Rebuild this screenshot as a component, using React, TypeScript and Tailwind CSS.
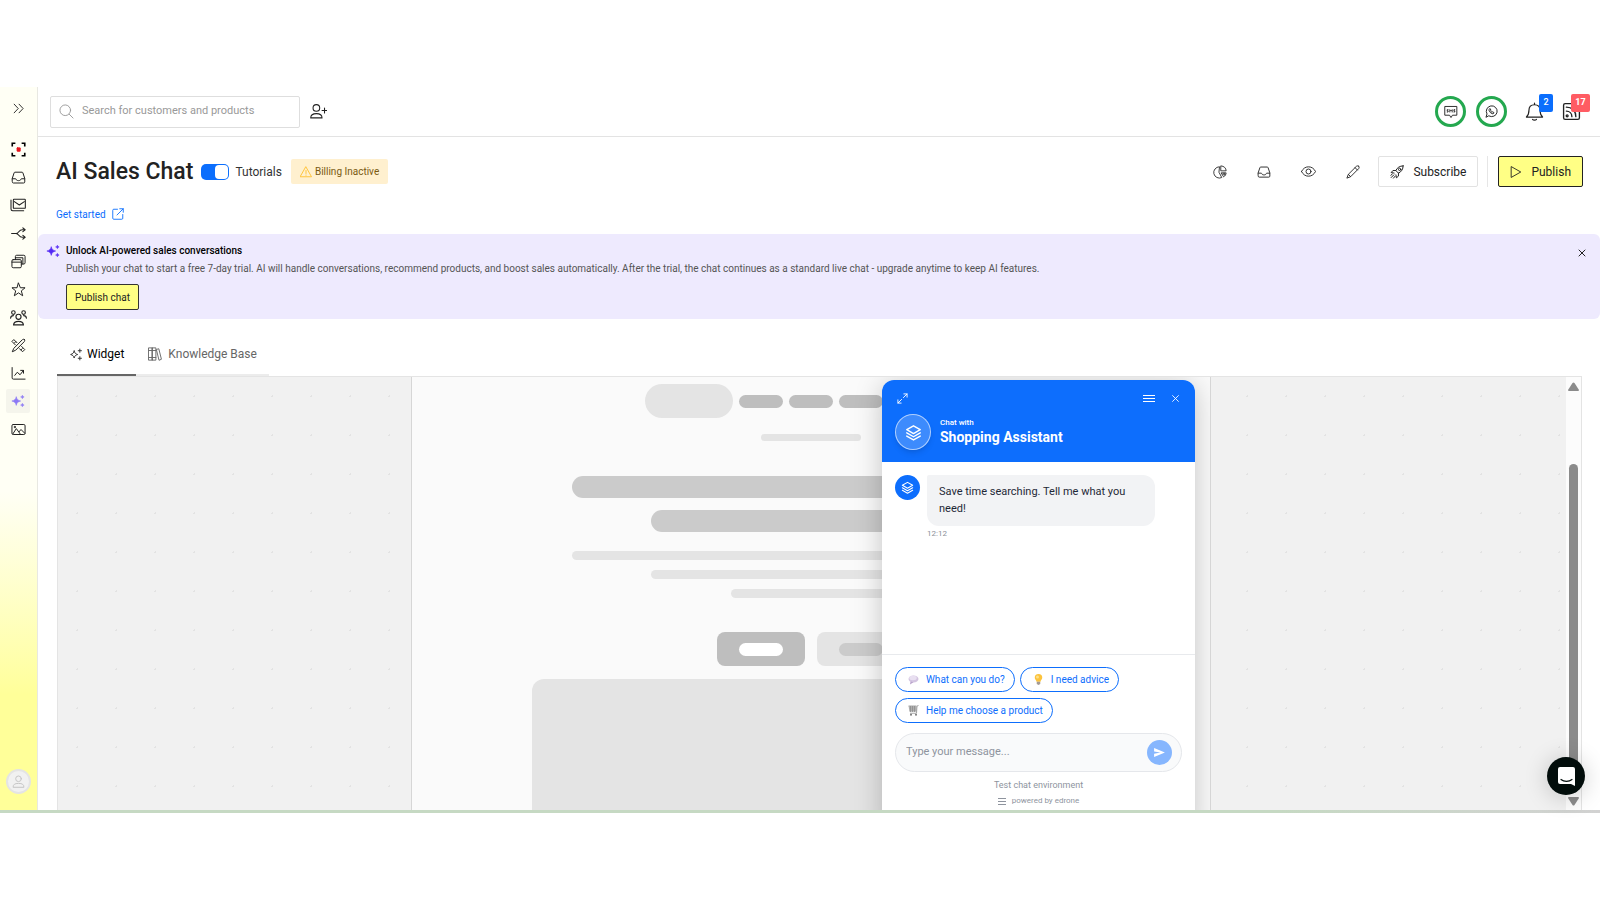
import React from 'react';

interface IconProps {
  size?: number;
  stroke?: number;
  className?: string;
  children?: React.ReactNode;
}

const Icon: React.FC<IconProps> = ({ size = 16, stroke = 1.6, className = '', children }) => (
  <svg
    width={size}
    height={size}
    viewBox="0 0 24 24"
    fill="none"
    stroke="currentColor"
    strokeWidth={stroke}
    strokeLinecap="round"
    strokeLinejoin="round"
    aria-hidden="true"
    className={`shrink-0 ${className}`}
  >
    {children}
  </svg>
);

const inboxPaths = (
  <>
    <path d="M2 13.5 5 4.5a1.5 1.5 0 0 1 1.4-1h11.2a1.5 1.5 0 0 1 1.4 1l3 9V19a1.8 1.8 0 0 1-1.8 1.8H3.8A1.8 1.8 0 0 1 2 19z" />
    <path d="M2.2 14h5c.5 0 .8.3.9.8.4 1.5 2 2.2 3.9 2.2s3.5-.7 3.9-2.2c.1-.5.4-.8.9-.8h5" />
  </>
);

const SparkleSolid: React.FC<{ size?: number; className?: string }> = ({ size = 16, className = '' }) => (
  <svg width={size} height={size} viewBox="0 0 24 24" fill="currentColor" stroke="currentColor" strokeLinejoin="round" aria-hidden="true" className={`shrink-0 ${className}`}>
    <path d="M9 4.500c1 4.500 2.500 6 7.500 7.500-5 1.500-6.500 3-7.500 7.500-1-4.500-2.500-6-7.500-7.500 5-1.500 6.500-3 7.500-7.500z" />
    <path d="M19.500 2c.4 2 1 2.600 3 3-2 .4-2.600 1-3 3-.4-2-1-2.600-3-3 2-.4 2.600-1 3-3z" />
    <path d="M19.500 16c.4 2 1 2.600 3 3-2 .4-2.600 1-3 3-.4-2-1-2.600-3-3 2-.4 2.600-1 3-3z" />
  </svg>
);

const LayersIcon: React.FC<{ size: number }> = ({ size }) => (
  <Icon size={size} stroke={2}>
    <path d="M12 2.500 21.500 8 12 13.500 2.500 8z" />
    <path d="M2.500 12.500 12 18l9.500-5.500" />
    <path d="M2.500 17 12 22.500 21.500 17" />
  </Icon>
);

const UserIcon: React.FC<{ size: number }> = ({ size }) => (
  <Icon size={size} stroke={1.8}>
    <circle cx="12" cy="7" r="5.200" />
    <path d="M2 22c0-4.500 3-6.500 10-6.500S22 17.500 22 22z" />
  </Icon>
);

const navItems = [
  {
    label: 'Live view',
    icon: (
      <Icon size={15} stroke={2.6} className="text-black">
        <path d="M2 7V2h5M17 2h5v5M22 17v5h-5M7 22H2v-5" strokeLinecap="butt" strokeLinejoin="miter" />
        <rect x="9.500" y="9" width="5.500" height="6" rx="1" fill="#e8141c" stroke="#e8141c" strokeWidth="1" />
      </Icon>
    ),
  },
  { label: 'Inbox', icon: <Icon size={15}>{inboxPaths}</Icon> },
  {
    label: 'Newsletters',
    icon: (
      <Icon>
        <rect x="5" y="3.500" width="18" height="13.500" rx="1" />
        <path d="m6.500 7 7.500 5 7.500-5" />
        <path d="M1.500 4.500v13.500a2.500 2.500 0 0 0 2.500 2.500h16.500" />
      </Icon>
    ),
  },
  {
    label: 'Automation',
    icon: (
      <Icon size={15} stroke={1.8}>
        <path d="M1 12h7c5-.2 4-6 10-6h4M8 12c5 .2 4 6 10 6h4" />
        <path d="m19 3 3.500 3-3.500 3M19 15l3.500 3-3.500 3" />
      </Icon>
    ),
  },
  {
    label: 'Pop-ups',
    icon: (
      <Icon size={15}>
        <rect x="1.500" y="9" width="15" height="13" rx="2" />
        <path d="M1.500 13h15" />
        <path d="M7 9V4a2 2 0 0 1 2-2h11.500a2 2 0 0 1 2 2v10a2 2 0 0 1-2 2h-4M7 6h12v10" />
      </Icon>
    ),
  },
  {
    label: 'Reviews',
    icon: (
      <Icon size={15}>
        <path d="m12 1.800 3 7.400h7.500l-6 5 2.200 7.800-6.700-4.600L5.300 22l2.200-7.800-6-5H9z" />
      </Icon>
    ),
  },
  {
    label: 'Customers',
    icon: (
      <Icon size={17}>
        <circle cx="12" cy="11" r="3.600" />
        <path d="M5 22.500c.3-3.500 3-5 7-5s6.700 1.500 7 5z" />
        <circle cx="4.800" cy="5" r="2.500" />
        <circle cx="19.200" cy="5" r="2.500" />
        <path d="M.8 13c.2-2.500 1.700-3.700 4-3.700M23.200 13c-.2-2.500-1.700-3.700-4-3.700" />
      </Icon>
    ),
  },
  {
    label: 'Design tools',
    icon: (
      <Icon size={15}>
        <path d="M21.500 2.500c-1.200-1-2.500-.6-3.500.4L4.500 16.500 2 22l5.500-2.500L21 6c1-1 1.500-2.500.5-3.500z" />
        <path d="m9.500 7.500-5-5-3 3 5.500 5.500M13.500 17l5 5 3.500-3.500-5-5" />
        <path d="m5.500 8 2-2M16 19l2-2" />
      </Icon>
    ),
  },
  {
    label: 'Analytics',
    icon: (
      <Icon size={15}>
        <path d="M1.800 2.500V19a2 2 0 0 0 2 2H22.500" />
        <path d="m6 15 4-5 4.500 4 5.500-7" />
        <path d="M15.500 7H20v4.500" />
      </Icon>
    ),
  },
  { label: 'AI tools', active: true, icon: <SparkleSolid size={14} className="text-[#8b78f5]" /> },
  {
    label: 'Gallery',
    icon: (
      <Icon size={15}>
        <rect x="1.500" y="4" width="21" height="16" rx="2" />
        <path d="m3 19 5.500-8.500 6.500 9M13 15.500l3-3.500 6 6" />
        <circle cx="6" cy="8" r="1" />
      </Icon>
    ),
  },
];

const Sidebar: React.FC = () => (
  <aside className="flex w-[38px] shrink-0 flex-col items-center border-r border-[#e8e8e2] bg-linear-to-b from-[#fffff5] from-56% to-[#ffff99] to-84% pt-[9px] pr-px pb-4 text-[#222]">
    <button aria-label="Expand menu" className="flex size-6 items-center justify-center">
      <Icon size={13} stroke={1.7}>
        <path d="m4 4 7.500 8L4 20M13 4l7.500 8-7.500 8" />
      </Icon>
    </button>
    <nav className="mt-[17px] flex flex-1 flex-col gap-1">
      {navItems.map((item) => (
        <a
          key={item.label}
          href="#"
          aria-label={item.label}
          className={`flex size-6 items-center justify-center rounded-xs ${item.active ? 'bg-[#f5f5ec]' : ''}`}
        >
          {item.icon}
        </a>
      ))}
    </nav>
    <button aria-label="Account" className="flex size-[25px] items-center justify-center rounded-full border-2 border-[#e4e4e4] bg-[#f1f1f1] text-[#c4c4c4]">
      <UserIcon size={13} />
    </button>
  </aside>
);

const TopBar: React.FC = () => (
  <header className="flex h-[50px] shrink-0 items-center border-b border-[#e3e3e3] pr-[19px] pl-3">
    <label className="flex h-8 w-[250px] items-center gap-2 rounded-xs border border-[#dedede] px-2 text-[#9a9a9a]">
      <Icon size={15} stroke={1.5}>
        <circle cx="10" cy="10" r="8.500" />
        <path d="m16.500 16.500 6 6" />
      </Icon>
      <input
        type="text"
        aria-label="Search"
        placeholder="Search for customers and products"
        className="w-full text-[11px] outline-none placeholder:text-[#999]"
      />
    </label>
    <button aria-label="Add customer" className="ml-[10px] text-[#222]">
      <Icon size={17} stroke={1.5}>
        <circle cx="9" cy="7" r="4.700" />
        <path d="M1 21c0-4 2-6 8-6s8 2 8 6zM20.500 7v7M17 10.500h7" />
      </Icon>
    </button>
    <div className="ml-auto flex items-center text-[#222]">
      <button aria-label="SMS" className="flex size-[31px] items-center justify-center rounded-full border-[3px] border-[#24a84f]">
        <Icon size={14} stroke={1.6}>
          <path d="M2 2.500h20v15h-7.500L12 21.500l-2.500-4H2z" />
          <path d="M7 8H5.500v2H7v2H5.500M10 12V8l2 2 2-2v4M18.500 8H17v2h1.500v2H17" />
        </Icon>
      </button>
      <button aria-label="WhatsApp" className="ml-[10px] flex size-[31px] items-center justify-center rounded-full border-[3px] border-[#24a84f]">
        <Icon size={13} stroke={1.8}>
          <path d="M2 22l1.700-5.500A10 10 0 1 1 7.500 20.300z" />
          <path d="M8 7.500c-1.500 1.500-.5 4 1.800 6.300 2.200 2.200 4.800 3.200 6.200 1.700l.5-1.500-2.500-1.500-1.200 1c-1-.4-2.400-1.700-2.700-2.700l1-1.300L9.500 7z" />
        </Icon>
      </button>
      <button aria-label="Notifications, 2 new" className="relative ml-[18px]">
        <Icon size={19} stroke={1.5}>
          <path d="M12 3.500c-4.500 0-7 3-7 7C5 15 4 17 1.800 19h20.400C20 17 19 15 19 10.500c0-4-2.500-7-7-7zM12 3.500V1.500M9.500 22c1 1.300 4 1.300 5 0" />
        </Icon>
        <span className="absolute -top-2 left-[14px] flex h-[18px] w-[14px] items-center justify-center rounded-xs bg-[#0b6efd] text-[9px] font-medium text-white">2</span>
      </button>
      <button aria-label="News, 17 new" className="relative ml-[18px]">
        <Icon size={19} stroke={1.7}>
          <rect x="2" y="2" width="20" height="20" rx="2" />
          <path d="M5.500 6.500c7 0 12 5 12 12M5.500 11.500c4 0 7 3 7 7" />
          <circle cx="6.500" cy="17.500" r="1.200" />
        </Icon>
        <span className="absolute -top-2 left-[9px] flex h-[18px] w-[19px] items-center justify-center rounded-xs bg-[#ff5c63] text-[9px] font-bold text-white">17</span>
      </button>
    </div>
  </header>
);

const PageHeader: React.FC = () => (
  <section className="shrink-0 pt-[19px] pr-[17px] pb-[11px] pl-[18px]">
    <div className="flex h-[31px] items-center">
      <h1 className="text-[23px] leading-none font-medium text-[#222]">AI Sales Chat</h1>
      <label className="ml-2 flex cursor-pointer items-center gap-[6px] text-xs text-[#333]">
        <input type="checkbox" defaultChecked className="peer sr-only" />
        <span className="flex h-4 w-7 justify-end rounded-[5px] bg-[#0b6efd] p-px">
          <span className="h-full w-[13px] rounded-sm bg-white" />
        </span>
        Tutorials
      </label>
      <span className="ml-[9px] flex h-[25px] items-center gap-[3px] rounded-xs bg-[#fff0cf] px-[9px] text-[10px] text-[#7a5a12]">
        <Icon size={12} stroke={1.8} className="text-[#ffc02e]">
          <path d="M12 2 23 21.500H1zM12 9v6M12 18v.5" />
        </Icon>
        Billing Inactive
      </span>
      <div className="ml-auto flex items-center text-[#333]">
        <div className="flex items-center gap-[30px] pr-[18px]">
          <button aria-label="Statistics">
            <Icon size={14} stroke={1.6}>
              <path d="M10.500 3A9.700 9.700 0 1 0 15 21.500L10.500 13z" />
              <path d="M14 1.500c5 .3 8.500 4 8.500 8.500H14zM14.500 13.500h8c-.2 2.500-1.500 5-3.700 6.500z" />
              <path d="M17.500 14v2.500M20 14v3" />
            </Icon>
          </button>
          <button aria-label="Inbox">
            <Icon size={14} stroke={1.7}>{inboxPaths}</Icon>
          </button>
          <button aria-label="Preview">
            <Icon size={15} stroke={1.6}>
              <path d="M.8 12C3 7.500 7 4.500 12 4.500S21 7.500 23.200 12C21 16.500 17 19.500 12 19.500S3 16.500.8 12z" />
              <circle cx="12" cy="12" r="4" />
            </Icon>
          </button>
          <button aria-label="Edit">
            <Icon size={14} stroke={1.7}>
              <path d="M21.800 2.200c-1.300-1.200-3-.9-4.100.2L4 16 1.500 22.500 8 20 21.600 6.300c1.100-1.100 1.400-2.900.2-4.100zM15.500 4.500l4 4M4 16l4 4" />
            </Icon>
          </button>
        </div>
        <button className="flex h-[31px] items-center gap-[9px] rounded-xs border border-[#e2e2e2] px-[11px] text-xs text-[#222]">
          <Icon size={14} stroke={1.7}>
            <path d="M22.500 1.500c-6 0-10 3-12.500 8l4.500 4.500c5-2.500 8-6.500 8-12.500z" />
            <circle cx="16.500" cy="7.500" r="2" />
            <path d="M10 9.500H5L2 13l5 .8M14.500 14v5L11 22l-.8-5M6.500 17 2 21.500M4 15.500l-2.500 2M8.500 19.500 6 22.500" />
          </Icon>
          Subscribe
        </button>
        <span className="mx-[9px] h-[31px] w-px bg-[#e6e6e6]" />
        <button className="ml-px flex h-[31px] items-center gap-[9px] rounded-xs border border-[#222] bg-[#ffff85] px-[11px] text-xs text-[#222]">
          <Icon size={12} stroke={1.8}>
            <path d="M3 1.500 21.500 12 3 22.500z" />
          </Icon>
          Publish
        </button>
      </div>
    </div>
    <a href="#" className="mt-[18px] flex h-[18px] w-fit items-center gap-[6px] text-[10px] text-[#0b6efd]">
      Get started
      <Icon size={12} stroke={1.8}>
        <path d="M11 2.500H3.500a2 2 0 0 0-2 2v16a2 2 0 0 0 2 2h16a2 2 0 0 0 2-2V13" />
        <path d="M15.500 1.500h7v7M22.500 1.500 10 14" />
      </Icon>
    </a>
  </section>
);

const TrialBanner: React.FC = () => (
  <section className="flex shrink-0 items-start rounded-md bg-[#eeeafe] px-2 pt-2 pb-[9px]">
    <SparkleSolid size={14} className="mt-[2px] text-[#5429f5]" />
    <div className="ml-[6px] flex-1">
      <h2 className="text-[10px] leading-[18px] font-medium text-black">Unlock AI-powered sales conversations</h2>
      <p className="text-[10px] leading-[18px] text-[#555]">
        Publish your chat to start a free 7-day trial. AI will handle conversations, recommend products, and boost sales automatically. After the trial, the chat continues as a standard live chat - upgrade anytime to keep AI features.
      </p>
      <button className="mt-[6px] flex h-[26px] items-center rounded-xs border border-[#333] bg-[#ffff85] px-2 text-[10px] text-[#222]">Publish chat</button>
    </div>
    <button aria-label="Dismiss" className="mt-[7px] mr-[6px] text-[#222]">
      <Icon size={8} stroke={3}>
        <path d="m3 3 18 18M21 3 3 21" />
      </Icon>
    </button>
  </section>
);

const Tabs: React.FC = () => (
  <div role="tablist" className="ml-[19px] flex h-[57px] w-fit shrink-0 items-end text-xs">
    <button role="tab" aria-selected="true" className="flex h-[42px] items-center gap-[5px] border-b-2 border-[#666] px-3 text-black">
      <Icon size={13} stroke={1.8} className="text-[#333]">
        <path d="M9.500 5.500c.9 3.800 2.200 5.100 6.500 6.500-4.300 1.400-5.600 2.700-6.500 6.500-.9-3.800-2.200-5.100-6.500-6.500 4.300-1.400 5.600-2.700 6.500-6.500z" />
        <path d="M20 2v6M17 5h6M20 16v6M17 19h6" />
      </Icon>
      Widget
    </button>
    <button role="tab" aria-selected="false" className="flex h-[42px] items-center gap-[6px] border-b-2 border-[#ececec] px-3 text-[#666]">
      <Icon size={14} stroke={1.6}>
        <path d="M1.500 1.500h6v21h-6zM7.500 1.500h6v21h-6zM1.500 6h12M1.500 18h12M15 4l3.500-1 4.500 18-3.500 1.500z" />
      </Icon>
      Knowledge Base
    </button>
  </div>
);

// Grey placeholder blocks standing in for the shop's page
const PageSkeleton: React.FC = () => (
  <div className="flex flex-col items-center pt-[7px]">
    <div className="flex items-center gap-[6px]">
      <div className="h-[34px] w-[88px] rounded-full bg-[#e4e4e4]" />
      <div className="h-[13px] w-11 rounded-full bg-[#bebebe]" />
      <div className="h-[13px] w-11 rounded-full bg-[#bebebe]" />
      <div className="h-[13px] w-11 rounded-full bg-[#bebebe]" />
      <div className="h-[34px] w-[88px] rounded-full bg-[#e4e4e4]" />
    </div>
    <div className="mt-4 h-[7px] w-[100px] rounded-full bg-[#e4e4e4]" />
    <div className="mt-[35px] flex flex-col items-center gap-3">
      <div className="h-[22px] w-[478px] rounded-full bg-[#cbcbcb]" />
      <div className="h-[22px] w-[320px] rounded-full bg-[#cbcbcb]" />
    </div>
    <div className="mt-[19px] flex flex-col items-center gap-[10px]">
      <div className="h-[9px] w-[478px] rounded-full bg-[#e4e4e4]" />
      <div className="h-[9px] w-[320px] rounded-full bg-[#e4e4e4]" />
      <div className="h-[9px] w-[160px] rounded-full bg-[#e4e4e4]" />
    </div>
    <div className="mt-[34px] flex gap-3">
      <div className="flex h-[34px] w-[88px] items-center justify-center rounded-lg bg-[#bebebe]">
        <div className="h-[13px] w-11 rounded-full bg-white" />
      </div>
      <div className="flex h-[34px] w-[88px] items-center justify-center rounded-lg bg-[#e4e4e4]">
        <div className="h-[13px] w-11 rounded-full bg-[#cbcbcb]" />
      </div>
    </div>
    <div className="mt-[13px] h-[300px] w-[558px] rounded-xl bg-[#e4e4e4]" />
  </div>
);

const BalloonIcon = (
  <svg width="11" height="11" viewBox="0 0 22 22" aria-hidden="true">
    <ellipse cx="11" cy="10" rx="10" ry="7" fill="#d3c4e0" />
    <ellipse cx="10" cy="8" rx="7.500" ry="4.500" fill="#e9e0f1" />
    <path d="M5 15l-1 6 7-4.500z" fill="#b9a3cc" />
  </svg>
);

const BulbIcon = (
  <svg width="11" height="11" viewBox="0 0 22 22" aria-hidden="true">
    <path d="M11 0a7.500 7.500 0 0 1 7.500 7.500c0 3.500-3.500 5-3.500 8H7c0-3-3.500-4.500-3.500-8A7.500 7.500 0 0 1 11 0z" fill="#fcc33c" />
    <circle cx="9" cy="6" r="3" fill="#fde08a" />
    <path d="M7.500 15.500h7V20L11 22l-3.500-2z" fill="#a49a94" />
  </svg>
);

const CartIcon = (
  <svg width="11" height="11" viewBox="0 0 22 22" aria-hidden="true">
    <path d="M1 2h16v12H3z" fill="#c6c6c6" />
    <path d="M1 2h16M2 6h15M2.500 10H17M5 2v12M9 2v12M13 2v12M21 1l-3 1-1 14.500H4" fill="none" stroke="#8a8a8a" strokeWidth="1.500" />
    <circle cx="6" cy="19.500" r="2" fill="#777" />
    <circle cx="16" cy="19.500" r="2" fill="#777" />
  </svg>
);

const suggestions = [
  { text: 'What can you do?', icon: BalloonIcon },
  { text: 'I need advice', icon: BulbIcon },
  { text: 'Help me choose a product', icon: CartIcon },
];

const ChatWidget: React.FC = () => (
  <div className="absolute top-[3px] right-[15px] flex w-[313px] flex-col overflow-hidden rounded-t-xl bg-white shadow-[0_4px_28px_rgba(0,0,0,0.22)]">
    <div className="h-[82px] bg-[#0d6efd] px-[13px] pt-3 text-white">
      <div className="flex h-3 items-center">
        <button aria-label="Enlarge" className="ml-[2px]">
          <Icon size={11} stroke={2}>
            <path d="M15 2h7v7M22 2l-8 8M9 22H2v-7M2 22l8-8" />
          </Icon>
        </button>
        <button aria-label="Menu" className="ml-auto flex w-3 flex-col gap-[2px]">
          <span className="h-px bg-white" />
          <span className="h-px bg-white" />
          <span className="h-px bg-white" />
        </button>
        <button aria-label="Close chat" className="mr-[3px] ml-[17px]">
          <Icon size={7} stroke={3}>
            <path d="m2 2 20 20M22 2 2 22" />
          </Icon>
        </button>
      </div>
      <div className="mt-[10px] flex items-center gap-[9px]">
        <div className="flex size-9 items-center justify-center rounded-full border border-white/60 bg-white/20 shadow-md">
          <LayersIcon size={17} />
        </div>
        <div>
          <p className="text-[8px] leading-[10px] font-medium">Chat with</p>
          <p className="text-[14px] leading-[18px] font-bold">Shopping Assistant</p>
        </div>
      </div>
    </div>

    <div className="flex h-[192px] items-start gap-[7px] px-[13px] pt-[13px]">
      <div className="flex size-[25px] items-center justify-center rounded-full bg-[#0d6efd] text-white">
        <LayersIcon size={13} />
      </div>
      <div>
        <p className="w-[228px] rounded-xl rounded-tl-xs bg-[#f2f3f5] px-3 pt-2 pb-[9px] text-[11px] leading-[17px] text-[#1f2937]">
          Save time searching. Tell me what you need!
        </p>
        <p className="mt-[2px] text-[8px] leading-[12px] text-[#8b9099]">12:12</p>
      </div>
    </div>

    <div className="border-t border-[#e8eaed] px-[13px] pt-3">
      <div className="flex flex-wrap gap-x-[5px] gap-y-[6px]">
        {suggestions.map((s) => (
          <button key={s.text} className="flex h-[25px] items-center gap-[7px] rounded-full border border-[#0d6efd] px-3 pr-[9px] text-[10px] text-[#0d6efd]">
            {s.icon}
            {s.text}
          </button>
        ))}
      </div>
      <div className="mt-[10px] flex h-[39px] items-center rounded-full border border-[#e5e7eb] bg-[#f9fafb] pr-[9px] pl-[10px]">
        <input
          type="text"
          aria-label="Message"
          placeholder="Type your message..."
          className="min-w-0 flex-1 text-[11px] outline-none placeholder:text-[#8e949e]"
        />
        <button aria-label="Send" className="flex size-[25px] items-center justify-center rounded-full bg-[#86b6fe] text-white">
          <svg width="11" height="9" viewBox="0 0 24 20" fill="currentColor" aria-hidden="true">
            <path d="M0 0 24 10 0 20V12.500L14 10 0 7.500z" />
          </svg>
        </button>
      </div>
      <p className="mt-[5px] text-center text-[9px] leading-4 text-[#8e949e]">Test chat environment</p>
      <p className="flex h-4 items-center justify-center gap-[6px] text-[8px] text-[#8e949e]">
        <span className="flex w-2 flex-col gap-[2px]">
          <span className="h-px bg-[#8e949e]" />
          <span className="h-px bg-[#8e949e]" />
          <span className="h-px bg-[#8e949e]" />
        </span>
        powered by edrone
      </p>
      <div className="h-6" />
    </div>
  </div>
);

const Preview: React.FC = () => (
  <div className="mr-[18px] ml-[19px] flex min-h-0 flex-1 overflow-hidden border-x border-t border-[#e4e4e4]">
    <div className="flex flex-1 justify-center bg-[#f1f1f1] bg-[radial-gradient(#e3e3e3_1px,transparent_1px)] bg-size-[39px_39px] pr-[2px]">
      <div className="relative w-[800px] overflow-hidden border-x border-[#d6d6d6] bg-[#fafafa]">
        <PageSkeleton />
        <ChatWidget />
      </div>
    </div>
    <div className="flex w-[15px] flex-col items-center bg-[#fcfcfc] pt-[5px] pb-1 text-[#8b8b8b]" aria-hidden="true">
      <svg width="11" height="9" viewBox="0 0 11 9" fill="currentColor">
        <path d="M4.500 1Q5.500 0 6.500 1L11 8q0 1-1 1H1Q0 9 0 8z" />
      </svg>
      <div className="mt-[73px] w-[9px] flex-1 rounded-full bg-[#8b8b8b]" />
      <svg width="11" height="9" viewBox="0 0 11 9" fill="currentColor" className="mt-1">
        <path d="M4.500 8Q5.500 9 6.500 8L11 1q0-1-1-1H1Q0 0 0 1z" />
      </svg>
    </div>
  </div>
);

const App: React.FC = () => (
  <div className="relative flex h-screen min-h-[600px] flex-col bg-white py-[87px] font-[Roboto,'Liberation_Sans',sans-serif]">
    <div className="flex min-h-0 flex-1">
      <Sidebar />
      <main className="flex min-w-0 flex-1 flex-col">
        <TopBar />
        <PageHeader />
        <TrialBanner />
        <Tabs />
        <Preview />
      </main>
    </div>
    <div className="h-[3px] shrink-0 bg-linear-to-r from-[#c6d9c3] from-80% to-[#d2d2d2] to-100%" />
    <button aria-label="Open support" className="absolute right-[15px] bottom-[105px] flex size-[38px] items-center justify-center rounded-full bg-[#020d0b] shadow-[0_2px_24px_rgba(0,0,0,0.2)]">
      <svg width="17" height="19" viewBox="0 0 17 19" aria-hidden="true">
        <path d="M2 0h13a2 2 0 0 1 2 2v17l-4-2H2a2 2 0 0 1-2-2V2a2 2 0 0 1 2-2z" fill="#fff" />
        <path d="M3 12.500c3 2.400 8 2.400 11 0" fill="none" stroke="#020d0b" strokeWidth="1.200" strokeLinecap="round" />
      </svg>
    </button>
  </div>
);

export default App;
